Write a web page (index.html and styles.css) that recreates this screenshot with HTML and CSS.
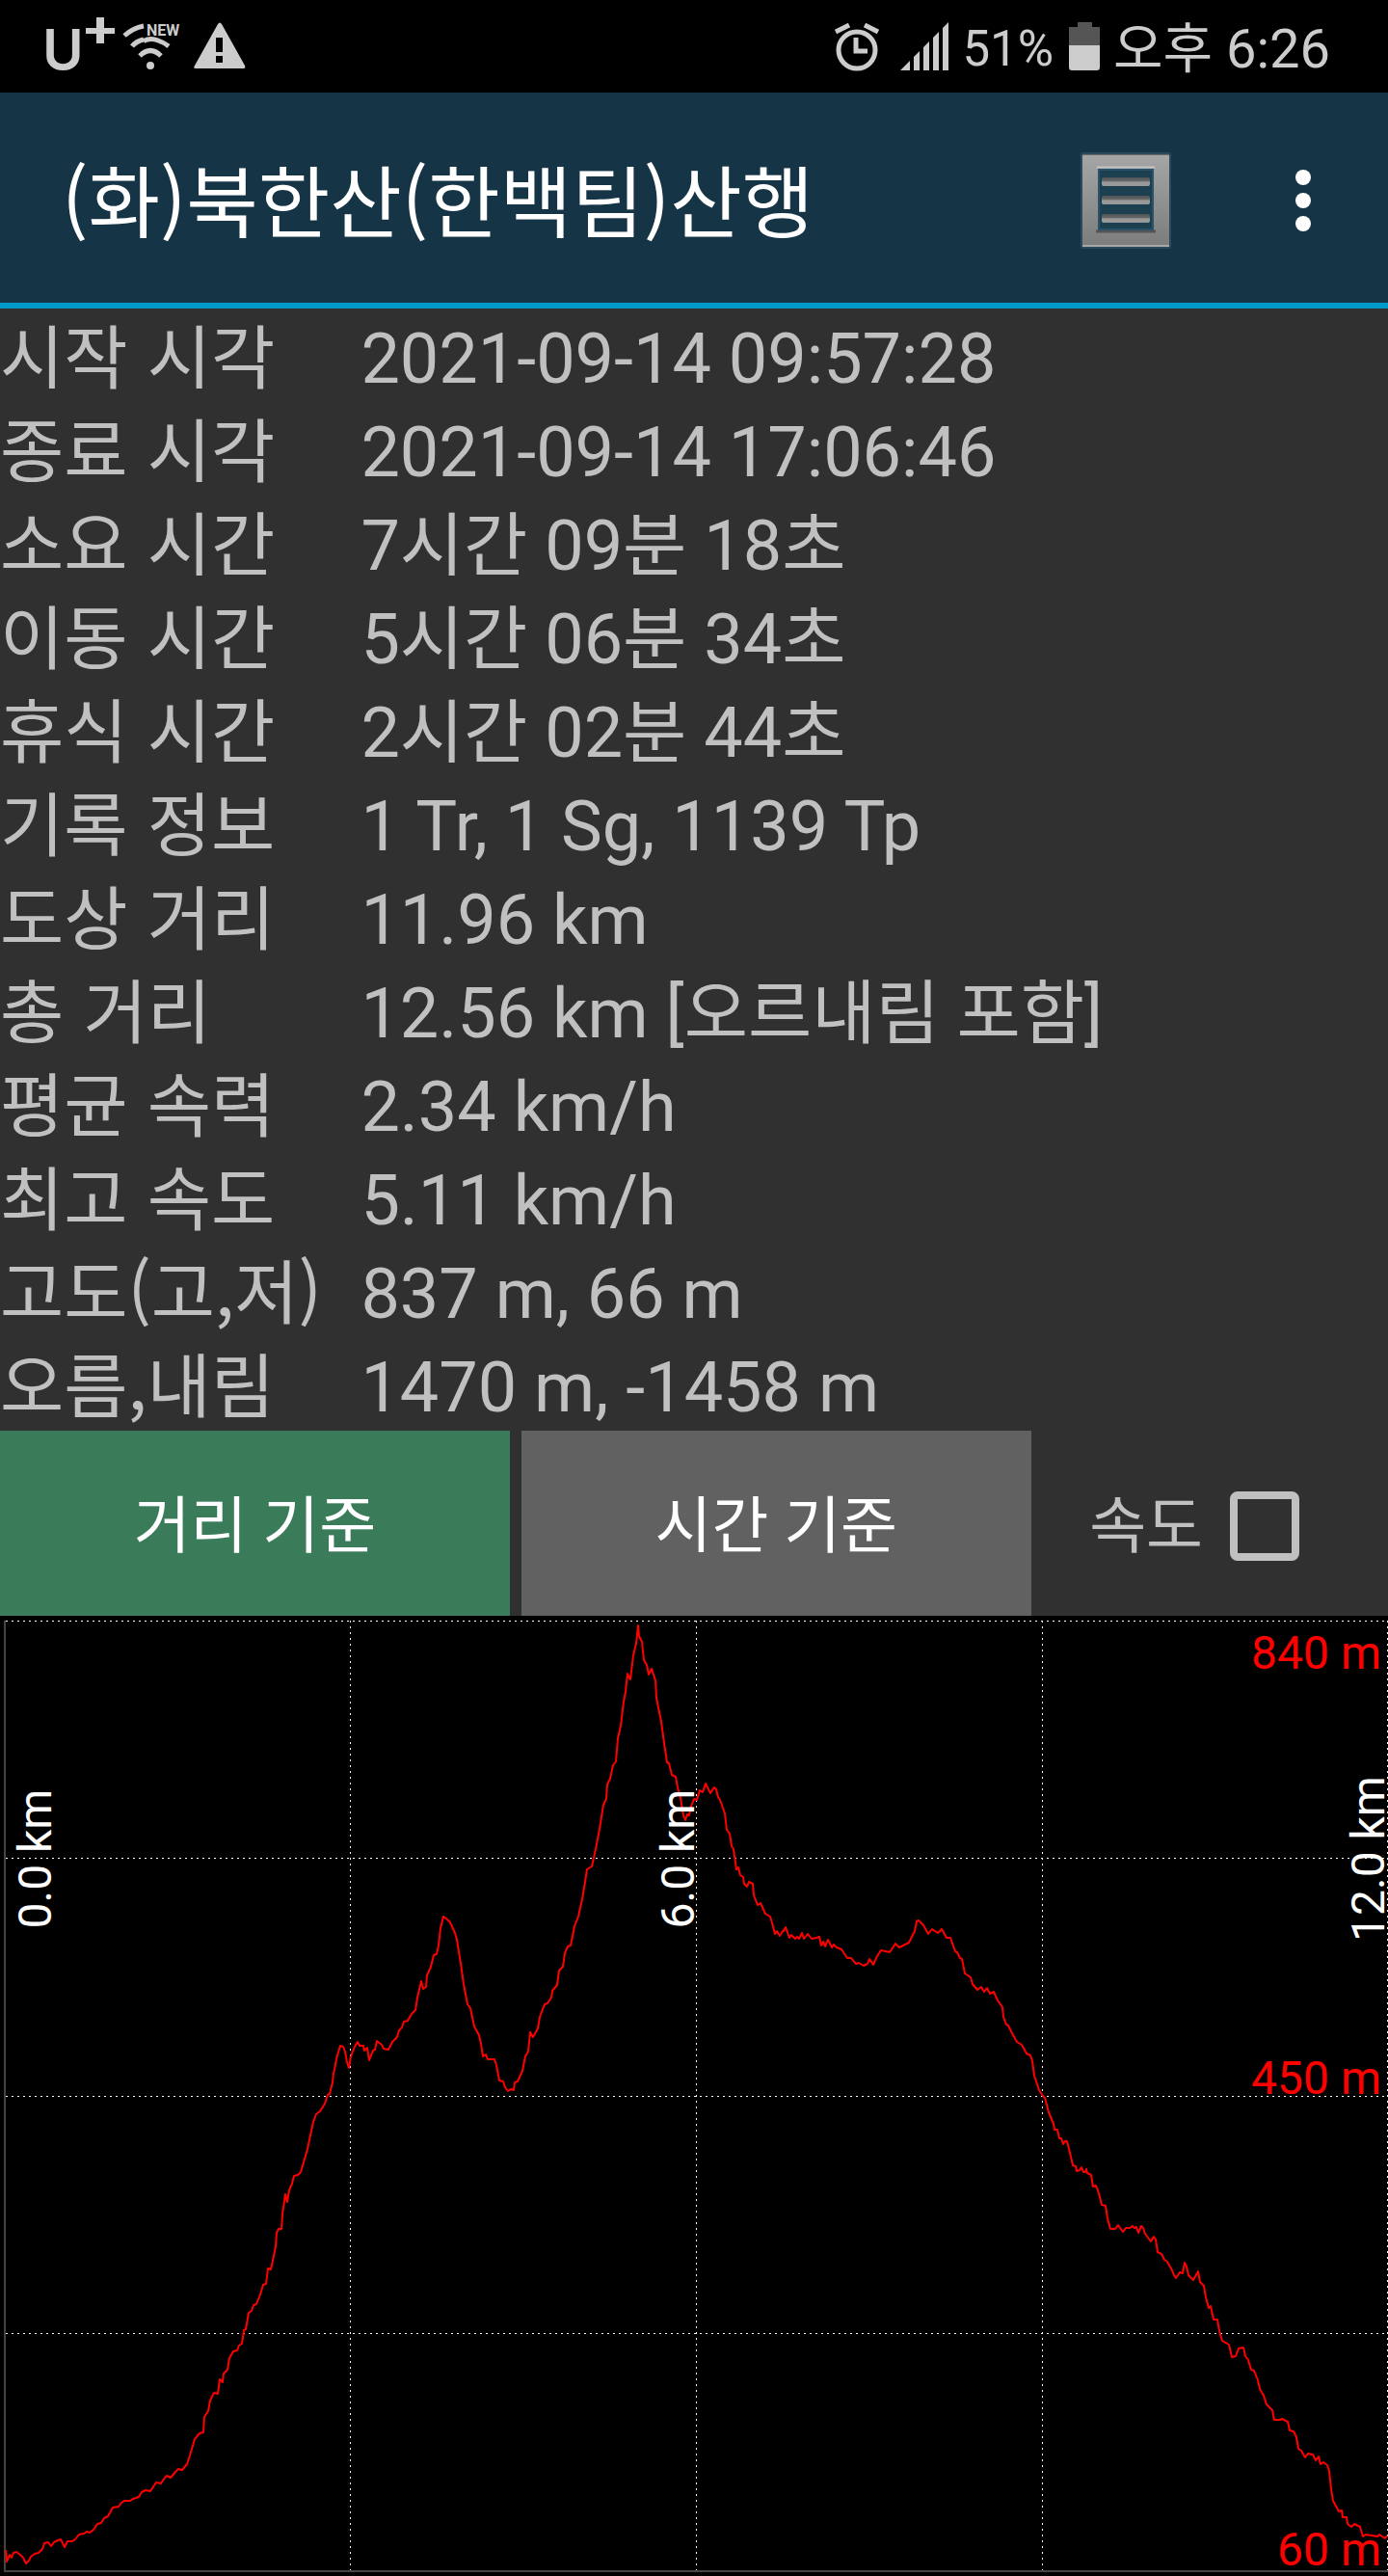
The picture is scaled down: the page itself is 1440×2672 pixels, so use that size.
FILE: index.html
```html
<!DOCTYPE html>
<html lang="ko">
<head>
<meta charset="utf-8">
<meta name="viewport" content="width=device-width, initial-scale=1">
<title>(화)북한산(한백팀)산행</title>
<link rel="stylesheet" href="styles.css">
</head>
<body>
<div class="status">
  <div class="status-left">
    <span class="carrier">U</span>
    <svg class="icon" width="32" height="96" viewBox="88 0 32 96" aria-hidden="true"><path d="M100 18h8v11h11v6h-11v10h-8v-10h-11v-6h11z" fill="#ccc"/></svg>
    <svg class="icon" width="72" height="96" viewBox="120 0 72 96" role="img" aria-label="Wi-Fi">
      <g fill="none" stroke="#ccc" stroke-width="5">
        <path d="M129 37Q138 29 149 27"/>
        <path d="M137 48Q141 43 149 41"/>
        <path d="M149 42.500Q156 39 164 42Q170 44 175 48"/>
        <path d="M145 58Q156 47 167 58"/>
      </g>
      <circle cx="156" cy="68" r="4" fill="#ccc"/>
      <text class="wifi-new" x="152" y="37">NEW</text>
    </svg>
    <svg class="icon" width="64" height="96" viewBox="192 0 64 96" role="img" aria-label="경고"><path fill="#ccc" fill-rule="evenodd" d="M226 25q2-3 4 0l24 43q1 3-1 3h-50q-3 0-1-3zM224 39v15h7v-15zM224 58v7h7v-7z"/></svg>
  </div>
  <div class="status-right">
    <svg class="icon" width="54" height="96" viewBox="866 0 54 96" role="img" aria-label="알람">
      <g fill="none" stroke="#ccc" stroke-width="5">
        <circle cx="889" cy="52" r="19"/>
        <path d="M867 33L881 26M911 33L897 26"/>
        <path d="M888 39v14h12"/>
      </g>
    </svg>
    <svg class="icon" width="50" height="96" viewBox="934 0 50 96" role="img" aria-label="신호"><path fill="#ccc" d="M934 73l10-10v10zM948 73V59l6-6v20zM958 73V49l6-6v30zM968 73V39l6-6v40zM978 73V29l6-6v50z"/></svg>
    <span class="percent">51%</span>
    <svg class="icon" width="34" height="96" viewBox="1108 0 34 96" role="img" aria-label="배터리"><path fill="#555" d="M1119 23h15v5h8v19h-32V28h9z"/><path fill="#ccc" d="M1110 47h32v23q0 3-3 3h-26q-3 0-3-3z"/></svg>
    <span class="clock">오후 6:26</span>
  </div>
</div>

<header class="bar">
  <h1 class="title">(화)북한산(한백팀)산행</h1>
  <button class="icon-button" type="button" aria-label="목록">
    <svg width="96" height="104" viewBox="1120 157 96 104" aria-hidden="true">
      <defs>
        <linearGradient id="frame" x1="0" y1="0" x2="0" y2="1"><stop offset="0" stop-color="#a6a6a6"/><stop offset="1" stop-color="#7c7c7c"/></linearGradient>
        <linearGradient id="line" x1="0" y1="0" x2="0" y2="1"><stop offset="0" stop-color="#4c5356"/><stop offset=".4" stop-color="#666"/><stop offset=".55" stop-color="#999"/><stop offset="1" stop-color="#999"/></linearGradient>
      </defs>
      <rect x="1121" y="159" width="94" height="100" rx="3" fill="#2b4a5b"/>
      <rect x="1123" y="161" width="90" height="96" fill="url(#frame)"/>
      <path d="M1123 161.500h90" stroke="#666"/>
      <path d="M1123 256h90" stroke="#a8a8a8" stroke-width="2"/>
      <path d="M1138 174.500h60" stroke="#c4c4c4" stroke-width="2"/>
      <path d="M1137 241h62" stroke="#555" stroke-width="3"/>
      <rect x="1139" y="176" width="58" height="64" fill="#1d4050"/>
      <rect x="1140" y="177" width="56" height="62" fill="none" stroke="#28526a" stroke-width="2"/>
      <rect x="1143" y="185" width="50" height="9" rx="2" fill="url(#line)"/>
      <rect x="1143" y="204" width="50" height="9" rx="2" fill="url(#line)"/>
      <rect x="1143" y="223" width="50" height="9" rx="2" fill="url(#line)"/>
    </svg>
  </button>
  <button class="icon-button" type="button" aria-label="더보기">
    <svg width="16" height="64" viewBox="0 0 16 64" aria-hidden="true" fill="#fff"><circle cx="8" cy="8" r="8"/><circle cx="8" cy="32" r="8"/><circle cx="8" cy="56" r="8"/></svg>
  </button>
</header>

<main>
  <table class="info">
    <tbody>
      <tr><th scope="row">시작 시각</th><td>2021-09-14 09:57:28</td></tr>
      <tr><th scope="row">종료 시각</th><td>2021-09-14 17:06:46</td></tr>
      <tr><th scope="row">소요 시간</th><td>7시간 09분 18초</td></tr>
      <tr><th scope="row">이동 시간</th><td>5시간 06분 34초</td></tr>
      <tr><th scope="row">휴식 시간</th><td>2시간 02분 44초</td></tr>
      <tr><th scope="row">기록 정보</th><td>1 Tr, 1 Sg, 1139 Tp</td></tr>
      <tr><th scope="row">도상 거리</th><td>11.96 km</td></tr>
      <tr><th scope="row">총 거리</th><td>12.56 km [오르내림 포함]</td></tr>
      <tr><th scope="row">평균 속력</th><td>2.34 km/h</td></tr>
      <tr><th scope="row">최고 속도</th><td>5.11 km/h</td></tr>
      <tr><th scope="row">고도(고,저)</th><td>837 m, 66 m</td></tr>
      <tr><th scope="row">오름,내림</th><td>1470 m, -1458 m</td></tr>
    </tbody>
  </table>

  <div class="controls">
    <button class="mode mode-active" type="button">거리 기준</button>
    <button class="mode" type="button">시간 기준</button>
    <div class="speed">
      <label for="speed">속도</label>
      <input class="check" type="checkbox" id="speed">
    </div>
  </div>

  <svg class="chart" viewBox="0 1676 1440 996" role="img" aria-label="고도 그래프">
    <path class="grid" d="M6 1681.500H1440M6 1927.500H1440M6 2174.500H1440M6 2420.500H1440M363.500 1681V2666M722.500 1681V2666M1081.500 1681V2666M1439.500 1681V2666"/>
    <path class="axis" d="M5 1681V2667H1440"/>
    <polyline class="track" points="6,2645 7,2657 10,2650 12,2653 14,2648 17,2647 21,2650 24,2653 27,2659 30,2656 32,2652 36,2649 40,2648 44,2644 46,2638 50,2637 53,2641 56,2637 60,2635 63,2634 67,2642 70,2636 75,2636 78,2634 82,2629 87,2628 90,2626 93,2627 97,2624 101,2618 105,2617 108,2612 112,2610 117,2601 123,2600 126,2596 129,2594 135,2594 138,2592 144,2590 147,2585 151,2583 156,2584 158,2581 162,2575 167,2576 171,2570 173,2568 177,2570 182,2564 185,2561 189,2562 194,2556 197,2547 202,2530 207,2524 211,2523 212,2507 216,2501 218,2490 222,2482 226,2483 228,2468 231,2471 232,2462 236,2458 238,2446 242,2439 246,2438 248,2433 251,2431 253,2417 255,2416 258,2399 261,2397 263,2391 266,2390 270,2380 273,2370 276,2369 278,2353 281,2354 284,2340 286,2330 287,2316 289,2312 292,2312 293,2297 296,2276 298,2284 300,2272 303,2265 305,2257 309,2256 312,2253 317,2236 319,2229 322,2215 325,2201 328,2193 332,2190 337,2182 340,2173 342,2172 345,2160 346,2150 347,2147 349,2136 350,2132 353,2122 356,2123 358,2128 360,2139 362,2145 364,2133 368,2123 371,2118 373,2122 377,2122 378,2127 381,2124 383,2137 387,2127 389,2126 391,2117 396,2121 398,2125 403,2126 407,2118 412,2113 414,2106 417,2103 419,2097 423,2096 427,2089 431,2085 433,2072 437,2055 439,2063 442,2061 443,2049 447,2040 450,2028 453,2027 455,2018 457,2000 460,1988 464,1991 467,1994 472,2005 474,2012 478,2037 481,2058 485,2079 488,2083 492,2102 497,2111 499,2120 501,2133 504,2131 506,2136 513,2136 515,2142 518,2158 522,2159 524,2165 527,2169 530,2167 533,2168 534,2160 537,2159 542,2148 545,2133 548,2128 550,2108 553,2113 558,2104 560,2092 565,2079 568,2078 572,2072 573,2065 578,2059 580,2044 584,2040 586,2026 589,2019 592,2018 596,1998 600,1988 604,1970 607,1952 609,1939 614,1936 618,1918 622,1897 626,1872 629,1866 630,1851 633,1845 636,1831 639,1827 641,1803 644,1790 647,1765 649,1755 651,1736 654,1742 657,1717 660,1705 662,1686 663,1697 666,1703 668,1722 671,1727 673,1737 676,1731 680,1743 681,1761 686,1786 689,1808 692,1828 694,1829 697,1841 701,1843 703,1854 706,1865 709,1883 711,1888 713,1882 715,1883 717,1874 720,1866 723,1867 726,1857 729,1859 732,1850 737,1860 741,1854 743,1856 745,1864 747,1867 752,1881 754,1898 757,1902 759,1915 761,1918 764,1939 766,1937 768,1945 771,1947 772,1954 775,1957 777,1952 781,1954 782,1966 786,1976 789,1974 794,1985 799,1988 802,1998 804,2006 806,2003 809,2008 812,2003 813,2003 815,1999 819,2010 821,2007 825,2011 827,2009 829,2011 832,2005 834,2011 838,2006 842,2011 847,2010 850,2009 852,2018 854,2014 856,2019 859,2012 863,2020 865,2017 868,2020 873,2022 877,2028 879,2031 883,2031 888,2037 891,2036 896,2039 900,2037 902,2032 906,2038 910,2029 914,2023 923,2025 929,2016 933,2020 943,2015 949,2003 951,1993 953,1992 958,1997 963,2006 967,2001 973,2005 977,2001 982,2010 986,2010 991,2024 993,2025 996,2031 998,2032 1001,2047 1007,2051 1009,2058 1014,2064 1018,2061 1021,2066 1024,2062 1027,2068 1031,2066 1035,2075 1040,2082 1041,2092 1044,2100 1046,2101 1050,2109 1055,2118 1060,2121 1065,2130 1069,2132 1071,2138 1073,2153 1078,2168 1082,2174 1084,2176 1088,2191 1093,2203 1094,2209 1097,2209 1099,2218 1101,2218 1103,2224 1105,2221 1107,2221 1110,2233 1113,2246 1116,2247 1117,2252 1120,2251 1122,2248 1124,2253 1126,2253 1127,2250 1128,2254 1132,2256 1134,2268 1137,2267 1140,2275 1143,2287 1147,2288 1149,2301 1152,2312 1157,2312 1160,2308 1165,2315 1168,2311 1172,2311 1175,2309 1177,2311 1179,2310 1181,2316 1184,2309 1186,2311 1188,2317 1194,2325 1197,2320 1199,2323 1201,2336 1205,2338 1208,2344 1211,2346 1216,2355 1218,2360 1220,2363 1224,2357 1227,2358 1229,2347 1231,2351 1233,2360 1238,2365 1243,2356 1245,2367 1249,2371 1251,2383 1254,2394 1256,2392 1259,2406 1263,2406 1265,2418 1268,2428 1275,2432 1278,2445 1282,2444 1285,2436 1290,2435 1292,2444 1295,2448 1298,2458 1301,2459 1305,2469 1307,2478 1311,2485 1314,2494 1320,2500 1322,2510 1328,2510 1330,2509 1336,2512 1338,2521 1342,2522 1345,2528 1347,2540 1350,2542 1354,2549 1357,2545 1362,2546 1365,2552 1368,2548 1370,2556 1373,2554 1377,2557 1379,2563 1381,2582 1383,2594 1389,2605 1392,2604 1393,2611 1397,2611 1398,2618 1402,2621 1405,2618 1411,2621 1414,2631 1417,2629 1429,2631 1431,2629 1437,2633 1439,2630"/>
    <g class="distance">
      <text transform="translate(53 1928) rotate(-90)">0.0 km</text>
      <text transform="translate(720 1928) rotate(-90)">6.0 km</text>
      <text transform="translate(1436 1928) rotate(-90)">12.0 km</text>
    </g>
    <g class="height">
      <text x="1433" y="1731">840 m</text>
      <text x="1433" y="2172">450 m</text>
      <text x="1433" y="2661">60 m</text>
    </g>
  </svg>
</main>
</body>
</html>
```
FILE: styles.css
```css
* {
  box-sizing: border-box;
}

body {
  margin: 0;
  background: #303030;
  color: #c0c0c0;
  font-family: Roboto, "Noto Sans CJK KR", sans-serif;
}

button {
  border: 0;
  margin: 0;
  padding: 0;
  background: none;
  color: inherit;
  font: inherit;
}

svg {
  display: block;
}

.icon {
  flex: none;
}

.status {
  display: flex;
  justify-content: space-between;
  height: 96px;
  padding: 0 60px 0 44px;
  background: #000;
  color: #ccc;
  line-height: 102px;
  white-space: nowrap;
}

.status-left,
.status-right {
  display: flex;
  align-items: flex-start;
}

.status-right {
  gap: 14px;
}

.carrier {
  width: 44px;
  font-family: Inter, Roboto, sans-serif;
  font-size: 58px;
  font-weight: 600;
}

.wifi-new {
  fill: #ccc;
  font-size: 16px;
  font-weight: 700;
}

.percent {
  font-size: 51px;
}

.clock {
  font-size: 56px;
}

.bar {
  display: flex;
  align-items: center;
  gap: 128px;
  min-height: 224px;
  padding: 6px 80px 0 64px;
  border-bottom: 6px solid #0099cc;
  background: #153445;
  color: #fff;
}

.title {
  flex: 1;
  margin: 0;
  padding-bottom: 6px;
  font-family: "Noto Sans CJK KR", sans-serif;
  font-size: 81px;
  font-weight: 400;
  line-height: 96px;
}

.info {
  width: 100%;
  border-collapse: collapse;
  table-layout: fixed;
  font-size: 72px;
  line-height: 89px;
  white-space: nowrap;
}

.info th,
.info td {
  padding: 8px 0 0;
  font-weight: 400;
  text-align: left;
  vertical-align: top;
}

.info th {
  width: 26%;
  font-family: "Noto Sans CJK KR", sans-serif;
  line-height: 75px;
}

.controls {
  display: grid;
  grid-template-columns: 10fr 12px 10fr 7fr;
  min-height: 192px;
  font-size: 64px;
}

.mode {
  padding-bottom: 6px;
  background: #616161;
  color: #fff;
}

.mode-active {
  grid-column: 1 / 2;
  background: #3a7c59;
}

.mode:not(.mode-active) {
  grid-column: 3 / 4;
}

.speed {
  display: flex;
  align-items: center;
  justify-content: flex-end;
  gap: 28px;
  padding: 6px 92px 0 0;
}

.speed label {
  padding-bottom: 12px;
}

.check {
  appearance: none;
  width: 72px;
  height: 72px;
  margin: 0;
  border: 8px solid #c0c0c0;
  border-radius: 8px;
}

.chart {
  width: 100%;
  height: auto;
  background: #000;
  font-size: 48px;
}

.grid {
  fill: none;
  stroke: #fff;
  stroke-width: 1;
  stroke-dasharray: 2 4;
}

.axis {
  fill: none;
  stroke: #444;
  stroke-width: 2;
}

.track {
  fill: none;
  stroke: #f00;
  stroke-width: 2;
  stroke-linejoin: round;
}

.distance {
  fill: #fff;
  text-anchor: middle;
}

.height {
  fill: #f00;
  text-anchor: end;
}
```
